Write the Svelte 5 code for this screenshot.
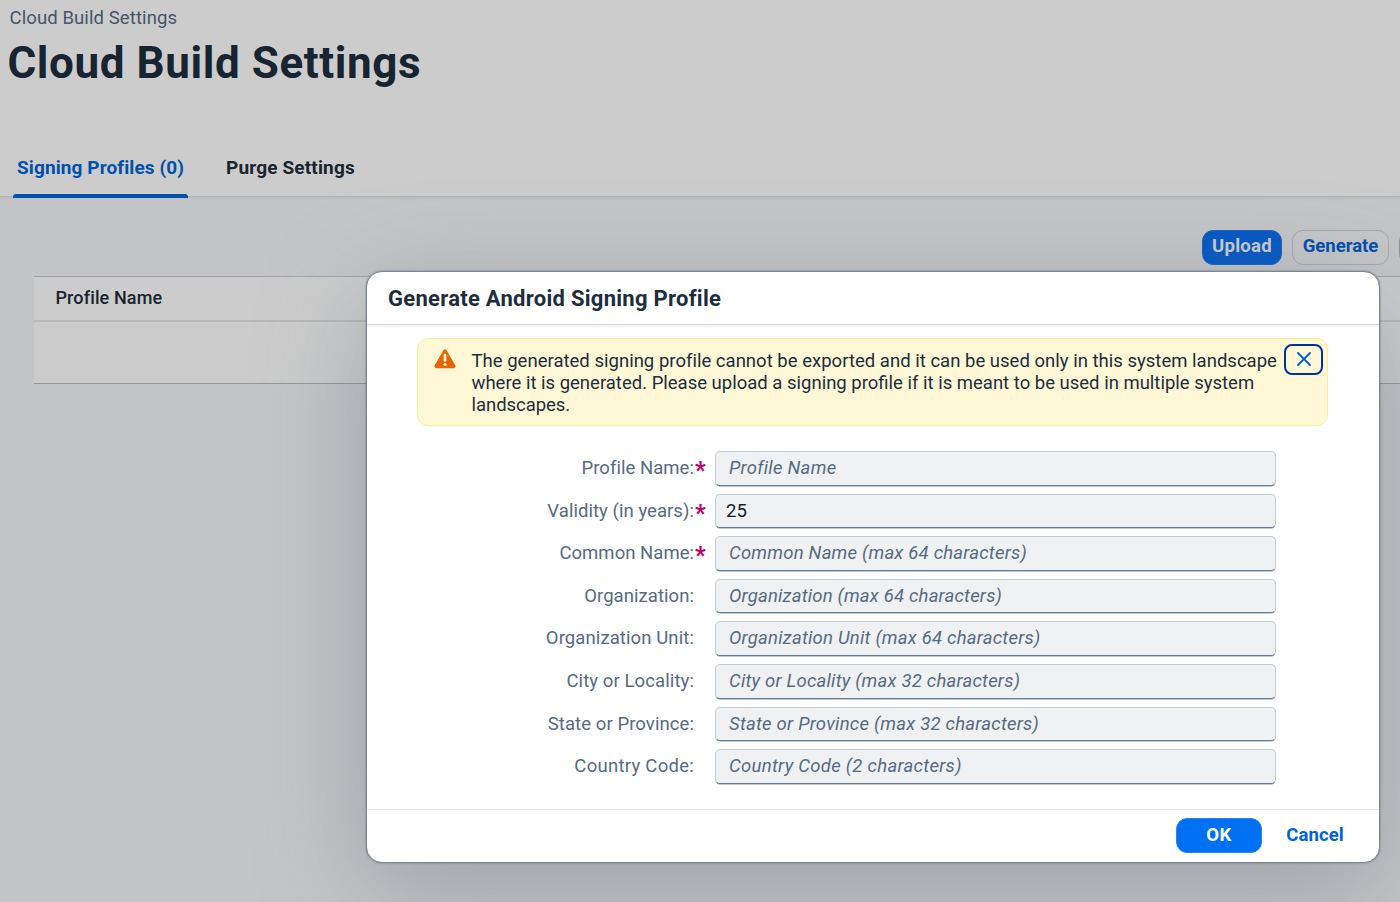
<script>
  const fields = [
    { label: 'Profile Name:', ls: 0.05, ps: 0.26, placeholder: 'Profile Name', required: true },
    { label: 'Validity (in years):', ls: 0.05, ps: 0, placeholder: '', value: '25', required: true },
    { label: 'Common Name:', ls: 0.03, ps: 0.22, placeholder: 'Common Name (max 64 characters)', required: true },
    { label: 'Organization:', ls: 0.06, ps: 0.2, placeholder: 'Organization (max 64 characters)' },
    { label: 'Organization Unit:', ls: 0.1, ps: 0.23, placeholder: 'Organization Unit (max 64 characters)' },
    { label: 'City or Locality:', ls: 0.1, ps: 0.22, placeholder: 'City or Locality (max 32 characters)' },
    { label: 'State or Province:', ls: 0.08, ps: 0.23, placeholder: 'State or Province (max 32 characters)' },
    { label: 'Country Code:', ls: 0.27, ps: 0.3, placeholder: 'Country Code (2 characters)' }
  ];
</script>

<div class="page">
  <header>
    <div class="crumb">Cloud Build Settings</div>
    <h1>Cloud Build Settings</h1>
    <nav>
      <div class="tab active">Signing Profiles (0)</div>
      <div class="tab second">Purge Settings</div>
    </nav>
  </header>
  <div class="toolbar">
    <button class="upload">Upload</button>
    <button class="generate">Generate</button>
    <button class="more" aria-label="More"></button>
  </div>
  <div class="table">
    <div class="thead">Profile Name</div>
    <div class="tbody"></div>
  </div>

  <div class="dialog" role="dialog">
    <div class="title">Generate Android Signing Profile</div>
    <div class="content">
      <div class="strip">
        <svg class="warn" width="22" height="20" viewBox="0 0 22 20">
          <path d="M9.3 1.5Q11-.9 12.700 1.500L21.200 16.200Q22.300 18.800 19.700 19.200H2.300Q-.3 18.800.8 16.200Z" fill="#e76500" />
          <path d="M11 6.200V11.300" stroke="#fff8d6" stroke-width="2.700" stroke-linecap="round" />
          <circle cx="11" cy="15.500" r="1.600" fill="#fff8d6" />
        </svg>
        <div class="msg">
          <div class="l1">The generated signing profile cannot be exported and it can be used only in this system landscape</div>
          <div>where it is generated. Please upload a signing profile if it is meant to be used in multiple system</div>
          <div class="l3">landscapes.</div>
        </div>
        <button class="close" aria-label="Close">
          <svg width="14" height="14" viewBox="0 0 14 14"><path d="M1 1L13 13M13 1L1 13" stroke="#0064d9" stroke-width="1.900" stroke-linecap="round" /></svg>
        </button>
      </div>
      <div class="form">
        {#each fields as f}
          <div class="row">
            <span class="label" style="letter-spacing:{f.ls}px">{f.label}</span>
            <span class="star">{f.required ? '*' : ''}</span>
            <div class="field">
              {#if f.value}
                <span class="value">{f.value}</span>
              {:else}
                <span class="ph" style="letter-spacing:{f.ps}px">{f.placeholder}</span>
              {/if}
            </div>
          </div>
        {/each}
      </div>
    </div>
    <footer>
      <button class="ok">OK</button>
      <button class="cancel">Cancel</button>
    </footer>
  </div>
</div>

<style>
  :global(body) { margin: 0; overflow: hidden; }
  .page, .page * { box-sizing: border-box; }
  .page {
    position: relative;
    width: 1400px;
    height: 902px;
    overflow: hidden;
    background: #c4c5c7;
    font-family: Roboto, sans-serif;
    font-size: 18.5px;
    color: #172431;
  }
  button { font: inherit; padding: 0; margin: 0; }
  header {
    height: 196px;
    background: #ccc;
    box-shadow: 0 1px 0 #b3b4b5, 0 2px 2px rgba(0, 0, 0, 0.06);
    display: flex;
    flex-direction: column;
  }
  .crumb { padding: 7px 0 0 9.5px; height: 29px; line-height: 22px; color: #44566a; letter-spacing: 0.1px; }
  h1 { margin: 7px 0 0 7.5px; font-size: 44px; line-height: 54px; font-weight: 700; letter-spacing: 0.58px; white-space: nowrap; }
  nav { display: flex; margin: auto 0 0 13px; height: 52px; font-weight: 700; }
  .tab { height: 53px; padding: 11px 4px 0; line-height: 26px; white-space: nowrap; font-size: 19px; letter-spacing: 0.16px; }
  .tab.active { width: 175px; color: #0050ae; position: relative; letter-spacing: 0.1px; }
  .tab.active::after { content: ''; position: absolute; left: 0; right: 0; bottom: -0.5px; height: 4px; background: #0050ae; border-radius: 3px 3px 0 0; }
  .tab.second { margin-left: 34px; }
  .toolbar { display: flex; justify-content: flex-start; padding: 34px 0 0 1202px; height: 80px; }
  .toolbar button { flex: none; height: 35px; border-radius: 11px; font-weight: 700; line-height: 31px; padding-bottom: 2px; }
  .upload { width: 80px; border: 1px solid #1a62c4; background: #0659c4; color: #ccc; letter-spacing: 0.3px; }
  .generate { width: 97px; margin-left: 10px; border: 1px solid #a5a8b0; background: #c6c6c7; color: #0050ae; }
  .more { width: 40px; margin-left: 10px; border: 1px solid #8e939c; background: #c6c6c7; }
  .table { margin-left: 34px; height: 108px; background: #ccc; border-top: 1px solid #a2a6aa; border-bottom: 1px solid #92979d; }
  .thead { height: 45px; padding-left: 21.5px; line-height: 42px; font-weight: 500; font-size: 18px; letter-spacing: 0.12px; border-bottom: 2px solid #b8b9ba; }
  .dialog {
    position: absolute;
    left: 366px;
    top: 271px;
    width: 1014px;
    height: 592px;
    background: #fff;
    border: 1px solid #7b8694;
    border-radius: 16px;
    box-shadow: 0 0 2px rgba(50, 65, 85, 0.6), 0 27px 107px rgba(85, 98, 115, 0.36);
    display: flex;
    flex-direction: column;
    color: #1d2d3e;
  }
  .title {
    height: 53px;
    padding-left: 21px;
    line-height: 53px;
    font-size: 22px;
    font-weight: 700;
    letter-spacing: 0.27px;
    border-bottom: 1px solid #d5d7d9;
    box-shadow: 0 2px 2px rgba(0, 0, 0, 0.05);
  }
  .content { flex: 1; padding-top: 13px; }
  .strip {
    position: relative;
    width: 911px;
    height: 88px;
    margin-left: 50px;
    padding: 11px 0 0 16px;
    display: flex;
    background: #fff8d6;
    border: 1px solid #ffec98;
    border-radius: 11px;
  }
  .warn { flex: none; margin-top: -1px; }
  .msg { margin-left: 15.5px; line-height: 22px; white-space: nowrap; }
  .l1 { letter-spacing: 0.015px; }
  .l3 { letter-spacing: -0.05px; }
  .close {
    position: absolute;
    right: 4px;
    top: 5px;
    width: 39px;
    height: 31px;
    padding-bottom: 1px;
    display: flex;
    align-items: center;
    justify-content: center;
    border: 2px solid #0032a5;
    border-radius: 8px;
    background: #fff8d6;
  }
  .close svg { display: block; margin-bottom: 1px; }
  .form { padding-top: 25px; }
  .row { height: 42.600px; display: flex; align-items: flex-start; }
  .label { width: 327px; text-align: right; line-height: 35px; color: #556b82; white-space: nowrap; }
  .star { width: 21px; padding-left: 1px; height: 34px; line-height: 40px; font-size: 23px; font-weight: 900; color: #ba066c; }
  .field {
    width: 561px;
    height: 34.600px;
    padding-left: 13px;
    line-height: 33.500px;
    background: #eff1f2;
    border: 1px solid #c3ccd2;
    border-bottom: 1.500px solid #6a7f95;
    box-shadow: 0 1px 0 -0.500px #8395a6;
    border-radius: 5px;
    white-space: nowrap;
  }
  .ph { font-style: italic; color: #556b82; }
  .value { margin-left: -3px; color: #131e29; }
  footer { height: 53px; border-top: 1px solid #e4e6e8; display: flex; padding: 8px 0 0 809px; font-weight: 700; }
  .ok { width: 86px; height: 35px; padding-bottom: 1px; border: 1px solid #2a83f7; background: #0070f2; color: #fff; border-radius: 11px; letter-spacing: 0.6px; }
  .cancel { width: 58px; height: 34px; margin-left: 24px; border: 0; background: none; color: #0064d9; letter-spacing: 0.1px; }
</style>
